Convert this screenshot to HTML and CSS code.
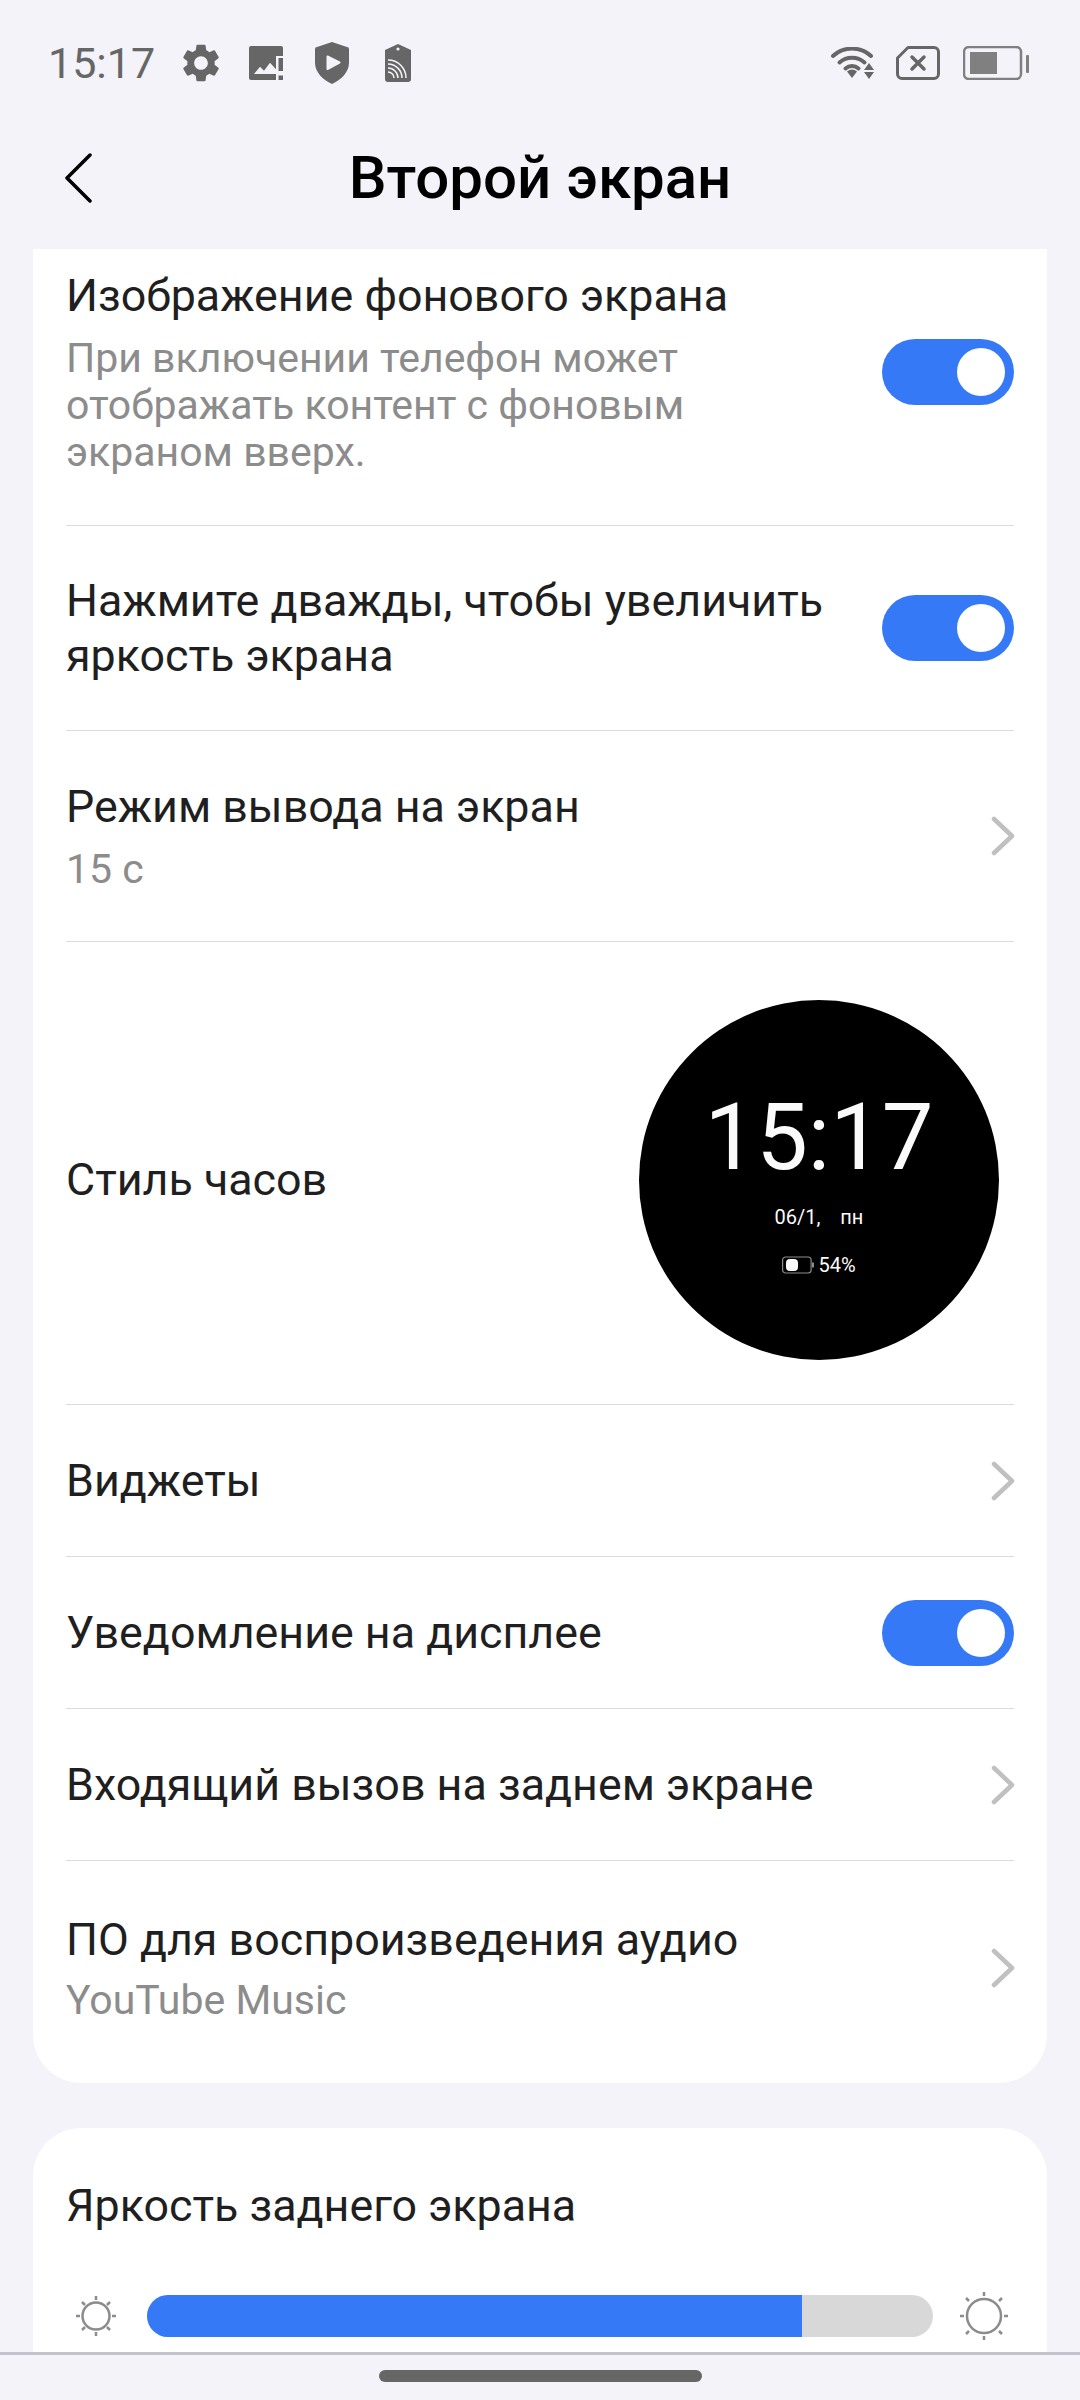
FILE: index.html
```html
<!DOCTYPE html>
<html lang="ru">
<head>
    <meta charset="UTF-8">
    <meta name="viewport" content="width=device-width, initial-scale=1.0">
    <title>Второй экран</title>
    <link rel="stylesheet" href="styles.css">
</head>
<body>
    <div class="screen">
        <div class="status-bar">
            <span class="status-time">15:17</span>
            <svg class="ic-gear" viewBox="2 2 20 20"><path fill="#666" d="M19.14 12.94c.04-.3.06-.61.06-.94 0-.32-.02-.64-.07-.94l2.03-1.58c.18-.14.23-.41.12-.61l-1.92-3.32c-.12-.22-.37-.29-.59-.22l-2.39.96c-.5-.38-1.03-.7-1.62-.94l-.36-2.54c-.04-.24-.24-.41-.48-.41h-3.84c-.24 0-.43.17-.47.41l-.36 2.54c-.59.24-1.13.57-1.62.94l-2.39-.96c-.22-.08-.47 0-.59.22L2.74 8.87c-.12.21-.08.47.12.61l2.03 1.58c-.05.3-.09.63-.09.94s.02.64.07.94l-2.03 1.58c-.18.14-.23.41-.12.61l1.92 3.32c.12.22.37.29.59.22l2.39-.96c.5.38 1.03.7 1.62.94l.36 2.54c.05.24.24.41.48.41h3.84c.24 0 .44-.17.47-.41l.36-2.54c.59-.24 1.13-.56 1.62-.94l2.39.96c.22.08.47 0 .59-.22l1.92-3.32c.12-.22.07-.47-.12-.61l-2.01-1.58zM12 15.6c-1.98 0-3.6-1.62-3.6-3.6s1.62-3.6 3.6-3.6 3.6 1.62 3.6 3.6-1.62 3.6-3.6 3.6z"/></svg>
            <svg class="ic-pic" viewBox="0 -1 35 36">
                <path fill="#666" d="M2 0H32a2 2 0 0 1 2 2v8H27V34H2a2 2 0 0 1-2-2V2a2 2 0 0 1 2-2z"/>
                <path fill="#f3f3f9" d="M5 28l6-7.300 4 4 6-8 6 6.600V28z"/>
                <path fill="#666" d="M29.500 12H34V25H29.500zM29.500 29.500H34V34H29.500z"/>
            </svg>
            <svg class="ic-shield" viewBox="0 0 34 42">
                <path fill="#666" d="M17 0l15 5a2 2 0 0 1 2 2v14c0 9-8 17-17 21C8 38 0 30 0 21V7a2 2 0 0 1 2-2z"/>
                <path fill="#f3f3f9" stroke="#f3f3f9" stroke-width="2" stroke-linejoin="round" d="M12.500 14.500L24.500 20.500 12.500 27z"/>
            </svg>
            <svg class="ic-tag" viewBox="0 0 26 38">
                <path fill="#666" d="M13 0l13 6v29a3 3 0 0 1-3 3H3a3 3 0 0 1-3-3V6z"/>
                <circle cx="13" cy="5" r="1.6" fill="#f3f3f9"/>
                <g fill="none" stroke="#f3f3f9" stroke-width="1.500">
                    <path d="M3 16a18 18 0 0 1 18 18"/>
                    <path d="M3 20a14 14 0 0 1 14 14"/>
                    <path d="M3 24a10 10 0 0 1 10 10"/>
                    <path d="M3 28a6 6 0 0 1 6 6"/>
                </g>
            </svg>
            <div class="status-right">
                <svg class="ic-wifi" viewBox="0 0 44 32">
                    <g fill="none" stroke="#666" stroke-width="4" stroke-linecap="round">
                        <path d="M2 9a28 28 0 0 1 38 0"/>
                        <path d="M8.500 15.500a19 19 0 0 1 25 0"/>
                        <path d="M14.500 21.500a10 10 0 0 1 13 0"/>
                    </g>
                    <path fill="#666" d="M16 24.500a8 8 0 0 1 10 0l-5 6.500zM38 16l5 7H33zM33 25h10l-5 7z"/>
                </svg>
                <svg class="ic-sim" viewBox="0 0 44 34">
                    <path fill="none" stroke="#666" stroke-width="3" stroke-linejoin="round" d="M12 1.500H38a4.500 4.500 0 0 1 4.500 4.500v22a4.500 4.500 0 0 1-4.500 4.500H6A4.500 4.500 0 0 1 1.500 28V12z"/>
                    <path fill="none" stroke="#666" stroke-width="3.500" stroke-linecap="round" d="M16 11l12 12M28 11L16 23"/>
                </svg>
                <svg class="ic-batt" viewBox="0 0 66 34">
                    <rect x="1" y="1" width="57" height="32" rx="5" fill="none" stroke="#808080" stroke-width="2.500"/>
                    <rect x="7" y="6" width="27" height="22" fill="#808080"/>
                    <rect x="63" y="9" width="3" height="18" rx="1" fill="#808080"/>
                </svg>
            </div>
        </div>

        <div class="title-bar">
            <svg class="back" viewBox="0 0 28 50"><path fill="none" stroke="#000" stroke-width="3.500" stroke-linecap="round" stroke-linejoin="round" d="M25 2L2 25l23 23"/></svg>
            <h1>Второй экран</h1>
        </div>

        <div class="content">
            <div class="card card-main">
                <div class="row row-bg">
                    <div class="row-text">
                        <div class="label">Изображение фонового экрана</div>
                        <div class="sub">При включении телефон может отображать контент с фоновым экраном вверх.</div>
                    </div>
                    <div class="switch"><span class="thumb"></span></div>
                </div>
                <div class="row row-double">
                    <div class="row-text">
                        <div class="label">Нажмите дважды, чтобы увеличить яркость экрана</div>
                    </div>
                    <div class="switch"><span class="thumb"></span></div>
                </div>
                <div class="row row-mode">
                    <div class="row-text">
                        <div class="label">Режим вывода на экран</div>
                        <div class="sub">15 с</div>
                    </div>
                    <svg class="chev" viewBox="0 0 24 40"><path d="M3 3l18 17L3 37"/></svg>
                </div>
                <div class="row row-clock">
                    <div class="label">Стиль часов</div>
                    <div class="clock">
                        <div class="clock-time">15:17</div>
                        <div class="clock-date">06/1,    пн</div>
                        <div class="clock-batt">
                            <svg viewBox="0 0 33 18"><rect x="0.600" y="1" width="28.500" height="16" rx="3" fill="none" stroke="#8c8c8c" stroke-width="1.200"/><rect x="4" y="3" width="12" height="12" rx="4" fill="#fafafa"/><rect x="30" y="6.500" width="2" height="5" fill="#8c8c8c"/></svg>
                            <span>54%</span>
                        </div>
                    </div>
                </div>
                <div class="row row-short">
                    <div class="label">Виджеты</div>
                    <svg class="chev" viewBox="0 0 24 40"><path d="M3 3l18 17L3 37"/></svg>
                </div>
                <div class="row row-short">
                    <div class="label">Уведомление на дисплее</div>
                    <div class="switch"><span class="thumb"></span></div>
                </div>
                <div class="row row-short">
                    <div class="label">Входящий вызов на заднем экране</div>
                    <svg class="chev" viewBox="0 0 24 40"><path d="M3 3l18 17L3 37"/></svg>
                </div>
                <div class="row row-audio">
                    <div class="row-text">
                        <div class="label">ПО для воспроизведения аудио</div>
                        <div class="sub">YouTube Music</div>
                    </div>
                    <svg class="chev" viewBox="0 0 24 40"><path d="M3 3l18 17L3 37"/></svg>
                </div>
            </div>

            <div class="card card-bright">
                <div class="label">Яркость заднего экрана</div>
                <div class="slider-row">
                    <svg class="sun sun-small" viewBox="0 0 40 40">
                        <circle cx="20" cy="20" r="13.500"/>
                        <path d="M20 0v4M20 36v4M0 20h4M36 20h4M6 6l3 3M31 31l3 3M34 6l-3 3M9 31l-3 3"/>
                    </svg>
                    <div class="slider"><div class="slider-fill" style="width: 83.300%"></div></div>
                    <svg class="sun sun-big" viewBox="0 0 48 48">
                        <circle cx="24" cy="24" r="17"/>
                        <path d="M24 0v4M24 44v4M0 24h4M44 24h4M6 6l3 3M39 39l3 3M42 6l-3 3M9 39l-3 3"/>
                    </svg>
                </div>
            </div>
        </div>

        <div class="nav-bar"><span class="nav-handle"></span></div>
    </div>
</body>
</html>
```
FILE: styles.css
```css
* {
    box-sizing: border-box;
}
html, body {
    margin: 0;
    padding: 0;
}
body {
    font-family: Roboto, "Noto Sans", sans-serif;
    background-color: #f3f3f9;
}
.screen {
    width: 1080px;
    height: 2400px;
    display: flex;
    flex-direction: column;
    overflow: hidden;
    background-color: #f3f3f9;
}

/* status bar */
.status-bar {
    height: 126px;
    flex: none;
    display: flex;
    align-items: center;
    padding: 0 51px 0 48px;
}
.status-time {
    font-size: 43px;
    line-height: 50px;
    color: #666;
    width: 107px;
    white-space: nowrap;
}
.ic-gear {
    width: 38px;
    height: 38px;
    margin-left: 27px;
}
.ic-pic {
    width: 35px;
    height: 36px;
    margin-left: 29px;
}
.ic-shield {
    width: 34px;
    height: 42px;
    margin-left: 31px;
}
.ic-tag {
    width: 26px;
    height: 38px;
    margin-left: 36px;
}
.status-right {
    margin-left: auto;
    display: flex;
    align-items: center;
}
.ic-wifi {
    width: 44px;
    height: 32px;
}
.ic-sim {
    width: 44px;
    height: 34px;
    margin-left: 21px;
}
.ic-batt {
    width: 66px;
    height: 34px;
    margin-left: 23px;
}

/* title */
.title-bar {
    height: 123px;
    flex: none;
    display: flex;
    align-items: center;
    justify-content: center;
    position: relative;
}
.title-bar h1 {
    margin: 0;
    font-size: 60px;
    font-weight: 500;
    color: #000;
    padding-bottom: 20px;
}
.back {
    position: absolute;
    left: 65px;
    top: 27px;
    width: 28px;
    height: 50px;
}

/* cards */
.content {
    flex: 1;
    min-height: 0;
    overflow: hidden;
    padding: 0 33px;
}
.card {
    background: #fff;
    border-radius: 48px;
    padding: 0 33px;
}
.card-main {
    border-radius: 0 0 48px 48px;
    height: 1834px;
}
.card-bright {
    margin-top: 45px;
    padding-top: 51px;
    height: 400px;
}
.row {
    display: flex;
    align-items: center;
    justify-content: space-between;
    border-bottom: 1px solid #dcdcdc;
}
.row:last-child {
    border-bottom: none;
}
.row-bg {
    height: 277px;
    align-items: flex-start;
    padding-top: 20px;
}
.row-bg .switch {
    margin-top: 70px;
}
.row-double {
    height: 205px;
}
.row-double .label {
    line-height: 55px;
}
.row-mode {
    height: 211px;
}
.row-bg .sub, .row-mode .sub {
    margin-top: 13px;
}
.row-clock {
    height: 463px;
    padding-top: 13px;
}
.row-short {
    height: 152px;
}
.row-audio {
    height: 223px;
    padding-bottom: 9px;
}
.row-text {
    width: 770px;
}
.label {
    font-size: 44.800px;
    line-height: 53px;
    color: #1f1f1f;
}
.sub {
    font-size: 41px;
    line-height: 47px;
    color: #8c8c8c;
    margin-top: 11px;
}
.switch {
    width: 132px;
    height: 66px;
    border-radius: 33px;
    background: #3579f6;
    flex: none;
    display: flex;
    align-items: center;
    justify-content: flex-end;
    padding-right: 9px;
}
.thumb {
    width: 48px;
    height: 48px;
    border-radius: 50%;
    background: #fff;
}
.chev {
    width: 24px;
    height: 40px;
    flex: none;
    margin-right: -1px;
}
.chev path {
    fill: none;
    stroke: #c0c0c0;
    stroke-width: 4.500;
    stroke-linecap: round;
    stroke-linejoin: round;
}

/* clock preview */
.clock {
    width: 360px;
    height: 360px;
    border-radius: 50%;
    background: #000;
    color: #fafafa;
    flex: none;
    margin-right: 15px;
    display: flex;
    flex-direction: column;
    align-items: center;
    padding-top: 84px;
}
.clock-time {
    font-size: 92px;
    line-height: 108px;
}
.clock-date {
    font-size: 20px;
    line-height: 24px;
    margin-top: 13px;
    white-space: pre;
}
.clock-batt {
    display: flex;
    align-items: center;
    gap: 3px;
    font-size: 20px;
    line-height: 24px;
    margin-top: 24px;
}
.clock-batt svg {
    width: 33px;
    height: 18px;
}

/* brightness */
.slider-row {
    display: flex;
    align-items: center;
    margin-top: 60px;
    margin-left: 10px;
    margin-right: 6px;
}
.sun {
    flex: none;
}
.sun circle, .sun path {
    fill: none;
    stroke: #8c8c8c;
    stroke-width: 2.500;
}
.sun-small {
    width: 40px;
    height: 40px;
}
.sun-big {
    width: 48px;
    height: 48px;
}
.slider {
    flex: 1;
    height: 42px;
    margin: 0 27px 0 31px;
    border-radius: 21px;
    background: #d8d8d8;
    overflow: hidden;
}
.slider-fill {
    height: 100%;
    background: #3579f6;
}

/* bottom gesture bar */
.nav-bar {
    height: 48px;
    flex: none;
    background: #f3f3f9;
    border-top: 3px solid #c4c3cb;
    display: flex;
    justify-content: center;
    padding-top: 15px;
}
.nav-handle {
    width: 323px;
    height: 12px;
    border-radius: 6px;
    background: #666;
    margin-left: 1px;
}
```
